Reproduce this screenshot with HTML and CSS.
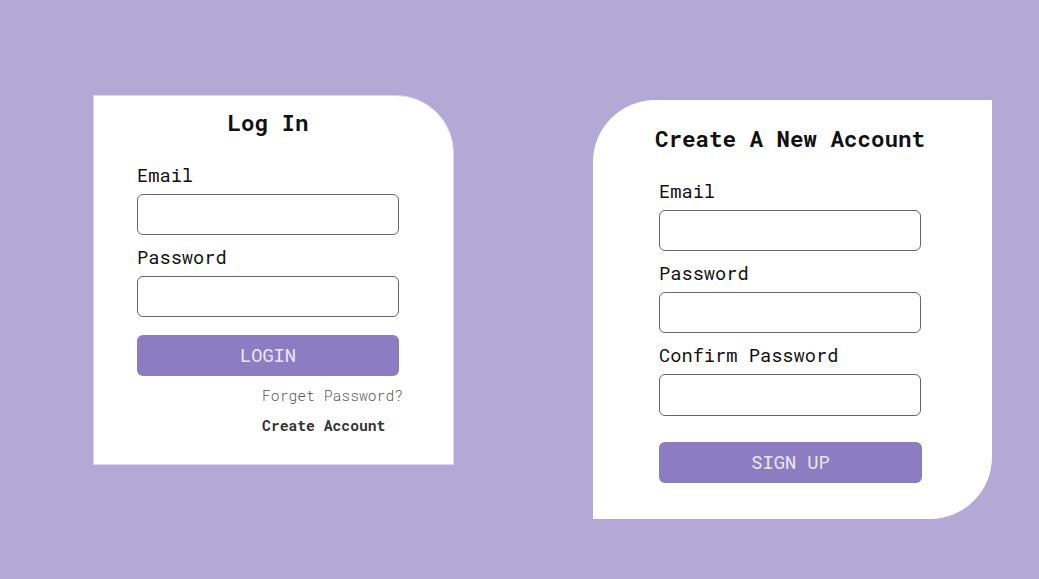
FILE: index.html
```html
<!DOCTYPE html>
<html lang="en">
<head>
<meta charset="utf-8">
<title>Log In / Sign Up</title>
<link rel="stylesheet" href="styles.css">
</head>
<body>
<main class="page">
  <section class="card card-login">
    <div class="form">
      <h2 class="title">Log In</h2>
      <label class="label label-first">Email</label>
      <div class="input"></div>
      <label class="label">Password</label>
      <div class="input"></div>
      <button class="btn btn-login">LOGIN</button>
      <div class="links">
        <a class="link-forget">Forget Password?</a>
        <a class="link-create">Create Account</a>
      </div>
    </div>
  </section>
  <section class="card card-signup">
    <div class="form">
      <h2 class="title">Create A New Account</h2>
      <label class="label label-first">Email</label>
      <div class="input"></div>
      <label class="label">Password</label>
      <div class="input"></div>
      <label class="label">Confirm Password</label>
      <div class="input"></div>
      <button class="btn btn-signup">SIGN UP</button>
    </div>
  </section>
</main>
</body>
</html>
```
FILE: styles.css
```css
* { box-sizing: border-box; }
html, body {
  margin: 0;
  padding: 0;
  background: #b3a9d7;
  font-family: "Roboto Mono", "DejaVu Sans Mono", "Liberation Mono", monospace;
  color: #111;
}
.page {
  width: 1039px;
  height: 579px;
  display: flex;
  align-items: flex-start;
  padding: 95px 0 0 93px;
  gap: 139px;
}
.card {
  background: #fff;
}
.card-login {
  width: 361px;
  height: 370px;
  border: 1px solid #ddd6ef;
  border-top-right-radius: 58px;
  padding: 12px 0 0 43px;
}
.card-signup {
  width: 399px;
  height: 419px;
  margin-top: 5px;
  border-top-left-radius: 62px;
  border-bottom-right-radius: 62px;
  padding: 24px 0 0 66px;
}
.form {
  width: 262px;
  display: flex;
  flex-direction: column;
  align-items: flex-start;
}
.title {
  margin: 0;
  align-self: center;
  font-size: 22.5px;
  line-height: 28px;
  font-weight: bold;
  white-space: nowrap;
}
.label {
  display: block;
  font-size: 18.7px;
  line-height: 22px;
  margin: 10.5px 0 8.5px 0;
  color: #111;
}
.label-first { margin-top: 27.5px; }
.input {
  width: 262px;
  height: 41px;
  border: 1px solid #666;
  border-radius: 6px;
  background: #fff;
}
.card-signup .input:last-of-type { height: 42px; }
.btn {
  width: 262px;
  height: 41px;
  border: 0;
  border-radius: 6px;
  background: #8c7dc2;
  color: #ece6f7;
  font-family: inherit;
  font-size: 18.7px;
  font-weight: 400;
  padding: 0 0 2px 0;
}
.btn-login { margin-top: 18px; }
.btn-signup { margin-top: 26px; width: 263px; }
.links {
  display: flex;
  flex-direction: column;
  align-items: flex-start;
  padding-left: 125px;
  margin-top: 11px;
  gap: 12px;
}
.links a {
  display: block;
  font-size: 14.7px;
  line-height: 18px;
  white-space: nowrap;
}
.link-forget { color: #555; font-weight: 300; }
.link-create { color: #333; font-weight: bold; }
```
